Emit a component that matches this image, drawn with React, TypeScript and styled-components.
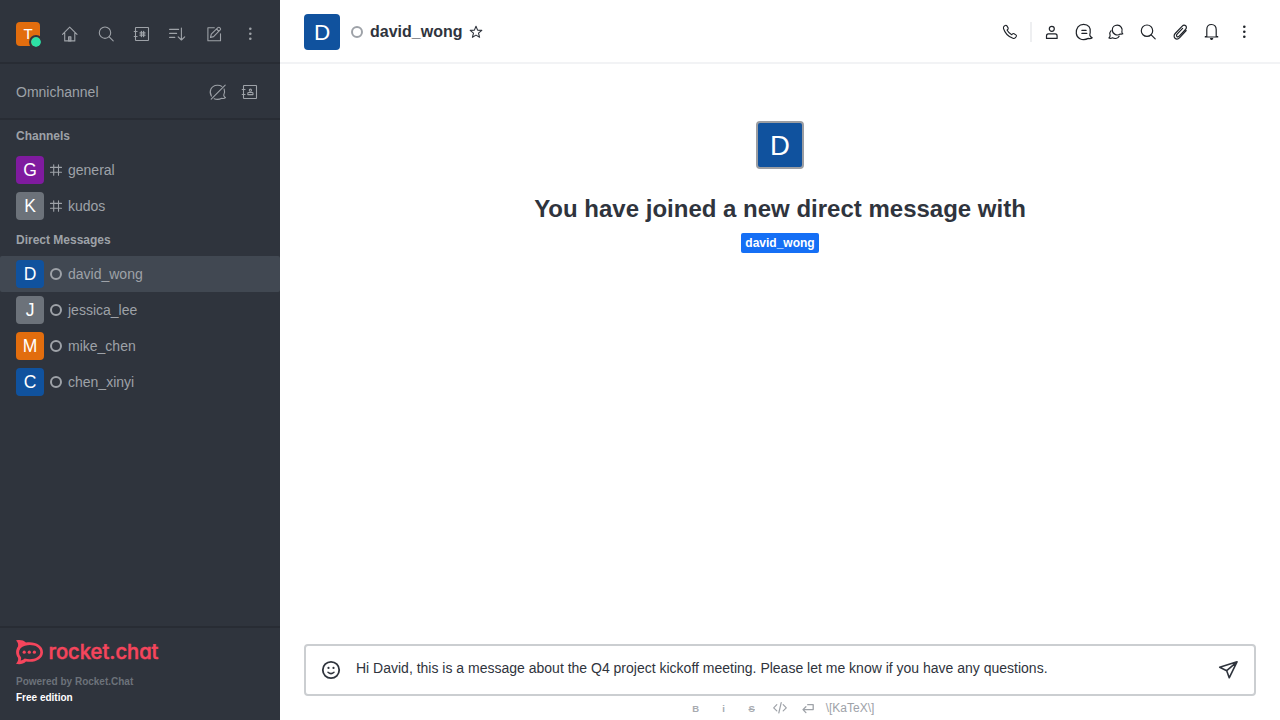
import React from 'react';
import styled, { createGlobalStyle } from 'styled-components';

const GlobalStyle = createGlobalStyle`
  *, *::before, *::after { box-sizing: border-box; }
  body { margin: 0; font-family: 'Liberation Sans', Arial, sans-serif; font-size: 14px; color: #2f343d; }
  h1, p { margin: 0; }
  button { border: 0; padding: 0; background: none; color: inherit; font: inherit; }
`;

const Page = styled.div`
  display: flex;
  width: 100%;
  height: 100vh;
  overflow: hidden;
  background: #fff;
`;

const Sidebar = styled.aside`
  display: flex;
  flex-direction: column;
  flex: 0 0 280px;
  background: #2f343d;
  color: #9ea2a8;
`;

const SidebarBar = styled.div`
  display: flex;
  align-items: center;
  justify-content: space-between;
  height: 64px;
  padding: 6px 16px 0;
  border-bottom: 2px solid #282c34;
`;

const OmniBar = styled.div`
  display: flex;
  align-items: center;
  justify-content: space-between;
  height: 56px;
  padding: 2px 16px 0;
  border-bottom: 2px solid #282c34;
`;

const Actions = styled.div<{ $gap: number }>`
  display: flex;
  align-items: center;
  gap: ${p => p.$gap}px;
`;

const HeaderActions = styled(Actions)`
  color: #1f2329;
`;

const IconButton = styled.button`
  display: flex;
  align-items: center;
  justify-content: center;
  width: 28px;
  height: 28px;
`;

const Avatar = styled.div<{ $size: number; $color: string; $ring?: boolean }>`
  display: flex;
  position: relative;
  flex: none;
  width: ${p => p.$size}px;
  height: ${p => p.$size}px;
  border: ${p => (p.$ring ? '2px solid #9c9ea2' : '0')};
  border-radius: 4px;
  background: ${p => p.$color};
`;

const Initial = styled.svg`
  display: block;
  width: 100%;
  height: 100%;
  fill: #fff;
  font-size: 125px;
  text-anchor: middle;
`;

const Presence = styled.span`
  position: absolute;
  right: -3px;
  bottom: -3px;
  width: 14px;
  height: 14px;
  border: 2px solid #2f343d;
  border-radius: 50%;
  background: #2de0a5;
  background-clip: padding-box;
`;

const Rooms = styled.nav`
  flex: 1;
`;

const SectionTitle = styled.div`
  height: 32px;
  padding-left: 16px;
  font-size: 12px;
  font-weight: 700;
  line-height: 32px;
`;

const Room = styled.div<{ $active?: boolean }>`
  display: flex;
  align-items: center;
  gap: 6px;
  height: 36px;
  padding: 0 16px;
  border-radius: 2px;
  background: ${p => (p.$active ? '#414852' : 'transparent')};
`;

const Offline = styled.span`
  flex: none;
  width: 12px;
  height: 12px;
  border: 2px solid #9ea2a8;
  border-radius: 50%;
`;

const Footer = styled.footer`
  height: 94px;
  padding: 11px 16px 0;
  border-top: 2px solid #282c34;
  font-size: 10px;
  font-weight: 700;
  line-height: 16px;
`;

const Brand = styled.div`
  display: flex;
  align-items: center;
  gap: 6px;
  height: 26px;
  margin-bottom: 9px;
  color: #f5455c;
`;

const Powered = styled.p`
  color: #6c727a;
`;

const Edition = styled.p`
  color: #fff;
`;

const Main = styled.main`
  display: flex;
  flex: 1;
  flex-direction: column;
  min-width: 0;
`;

const RoomHeader = styled.header`
  display: flex;
  align-items: center;
  height: 64px;
  padding: 2px 22px 0 24px;
  border-bottom: 2px solid #f2f3f5;
`;

const RoomTitle = styled.div`
  display: flex;
  flex: 1;
  align-items: center;
  gap: 7px;
  margin-left: 11px;
  font-size: 16px;
  font-weight: 700;
`;

const Divider = styled.span`
  width: 2px;
  height: 20px;
  margin: 0 2px;
  background: #eeeff1;
`;

const Intro = styled.section`
  display: flex;
  flex: 1;
  flex-direction: column;
  align-items: center;
  padding-top: 57px;
`;

const Heading = styled.h1`
  margin-top: 24px;
  font-size: 24px;
  font-weight: 700;
  line-height: 32px;
`;

const Tag = styled.span`
  height: 20px;
  margin-top: 8px;
  padding: 0 4px;
  border-radius: 2px;
  background: #156ff5;
  color: #fff;
  font-size: 12px;
  font-weight: 700;
  line-height: 20px;
`;

const Composer = styled.div`
  display: flex;
  align-items: center;
  height: 52px;
  margin: 0 24px;
  padding: 0 14px 0 13px;
  border: 2px solid #cbced1;
  border-radius: 4px;
`;

const Message = styled.p`
  flex: 1;
  margin-left: 13px;
  padding-bottom: 4px;
  line-height: 20px;
`;

const Formatting = styled.div`
  display: flex;
  align-items: center;
  justify-content: center;
  gap: 8px;
  height: 24px;
  color: #9ea2a8;
  font-size: 12px;
`;

const Format = styled.span`
  display: flex;
  justify-content: center;
  width: 20px;
`;

const Svg = styled.svg`
  display: block;
  flex: none;
  overflow: visible;
  fill: none;
  stroke: currentColor;
  stroke-linecap: round;
  stroke-linejoin: round;
`;

const shapes = {
  home: <><path d="M2.5 10.400 9.700 3.200l7.300 7.200M4.700 8.800v8.100h10.100V8.800" /><path d="M8.600 16.900v-4.100h2.300v4.100Z" fill="currentColor" fillOpacity=".6" /></>,
  search: <><circle cx="9" cy="8.7" r="5.7" /><path d="m13.2 12.9 4 4" /></>,
  directory: <><rect x="3.5" y="3.5" width="13" height="13" rx=".5" /><path d="M2.200 7.500h2.900M2.200 12.500h2.900" /><path d="M9.400 7.500v5M11.600 7.500v5M8 8.900h5M8 11.200h5" strokeWidth="1.300" /></>,
  sort: <><path d="M1.600 5.400h9M1.600 9.400h7M1.600 13.400h5.200M13.400 4v12m-3.200-3.200 3.200 3.200 3.300-3.200" /></>,
  edit: <><path d="M10.300 3.700H3.900v13h12.600V9.800M6.500 13.500l.8-3.300 6.600-6.600q1-.8 2.100.2t.2 2.100l-6.600 6.700ZM12.600 5l2.200 2.300" /></>,
  kebab: <g fill="currentColor" stroke="none"><circle cx="10.300" cy="4.700" r="1.300" /><circle cx="10.300" cy="9.800" r="1.300" /><circle cx="10.300" cy="14.800" r="1.300" /></g>,
  omniOff: <><path d="M3.400 14.100C.6 9.400 3 3.500 9.200 3.200c1.900-.1 3.400.3 4.600 1.200M16.100 7c.8 2 .6 4.300-.4 6.200.2 1.200.9 2 1.800 2.500-.9.8-2.200 1-3.600.6-2.700 1.300-5.400 1.400-7.700.5M3.200 17.200 17.200 3.100" /></>,
  contacts: <><rect x="3.500" y="3.500" width="13" height="13" rx=".5" /><path d="M2.200 7.500h2.900M2.200 12.500h2.900" /><circle cx="10.400" cy="8.200" r="1.100" /><path d="M7.800 12.600v-1.200q0-.9.8-.9h3.600q.8 0 .8.9v1.200Z" /></>,
  phone: <><path d="M4.100 4.200 5.300 3.400q1-.4 1.600.5l1.200 2q.4 1-.4 1.600l-.7.6q1.600 3 4.700 4.700l.7-.8q.7-.8 1.600-.3l1.900 1.200q.9.7.4 1.600l-.9 1.200q-1 1.100-2.500.6C8.400 14.700 5 11.200 3.500 6.500q-.3-1.400.6-2.300Z" /></>,
  user: <><circle cx="9.800" cy="6.800" r="2.500" /><path d="M4.500 16.400v-2.500q0-2.100 1.800-2.100h7q1.800 0 1.800 2.100v2.500Z" /></>,
  discussion: <><path d="M9.600 2.400c4.800 0 7.500 3.400 6.600 8.200-.2 1.200-.6 2-.3 2.900.3.900 1.100 1.700 2.300 2.200-1 .9-2.500 1.100-3.900.7-2.500 1.300-6 1.500-8.400.3C1.500 14.400 1.300 8.600 4 4.900c1.400-1.700 3.300-2.500 5.600-2.500ZM7.900 8.400h4.200M7.900 11.400h4.900" /></>,
  threads: <><path d="M11.300 3.200a4.900 4.900 0 0 1 4.600 6.600c-.1.700.3 1.400.9 2-.8.500-1.700.5-2.600.2A5 5 0 0 1 6.300 8c0-2.800 2.200-4.800 5-4.800ZM4.900 8.800C3.600 10.200 3.500 11.900 4.100 13.300c.1 1.100-.3 2-1.200 2.700 1.200.6 2.400.5 3.500-.2 2.800 1.200 5.700.4 6.700-1.600" /></>,
  clip: <><path d="m16.200 8.600-6.500 7c-1.400 1.500-3.500 1.700-4.700.6s-1.200-3.200.2-4.700l6.800-7.200c1.200-1.200 2.700-1.400 3.700-.5s.9 2.500-.2 3.700l-6.300 6.700c-.7.800-1.700.9-2.300.3s-.5-1.600.2-2.300l5.500-5.800" /></>,
  bell: <><path d="M4.800 14.400V7.500C4.800 4.500 6.500 2.500 9.500 2.500s4.700 2 4.700 5v6.900l1.500.3v.3H3.300v-.3Z" /><path d="M8.500 16.700h2.200l-1.100.7Z" /></>,
};

type IconName = keyof typeof shapes;

const Icon = ({ name, weight = 1.1 }: { name: IconName; weight?: number }) => (
  <Svg width="20" height="20" viewBox="0 0 20 20" strokeWidth={weight}>{shapes[name]}</Svg>
);

const Hash = () => (
  <Svg width="12" height="12" viewBox="0 0 12 12" strokeWidth="1.1">
    <path d="M3.700.7v10.600M8.500.7v10.600M.5 3.400h11M.5 8.200h11" />
  </Svg>
);

const Star = () => (
  <Svg width="14" height="14" viewBox="0 0 14 14" strokeWidth="1.1">
    <path d="m7 1.200 1.600 3.900 4.200.3-3.300 2.700 1.100 4.200L7 10.100l-3.600 2.200 1.100-4.200-3.300-2.700 4.200-.3Z" />
  </Svg>
);

const Smile = () => (
  <Svg width="24" height="24" viewBox="0 0 24 24" strokeWidth="1.8">
    <circle cx="12" cy="12" r="8.2" />
    <path d="M9 14.300q3 2.700 6 0" strokeWidth="1.500" />
    <g fill="currentColor" stroke="none"><circle cx="9.500" cy="9.900" r="1.100" /><circle cx="14.500" cy="9.900" r="1.100" /></g>
  </Svg>
);

const Send = () => (
  <Svg width="24" height="24" viewBox="0 0 24 24" strokeWidth="1.6">
    <path d="m21 3.800-17.300 5.500 7 3.400 2.500 7.100ZM10.700 12.700 21 3.800" />
  </Svg>
);

const RocketMark = () => (
  <Svg width="27" height="24" viewBox="0 0 27 24">
    <path fill="currentColor" stroke="none" fillRule="evenodd" d="M0 .5C3.500-.4 7.500 0 10 2.600 19 1.200 27 5.500 27 12.200 27 18.800 19 23.100 10 21.500 7.500 24 3.500 24.700 0 23.700 1.800 21.800 2.600 19.800 2 17.700-.5 14.300-.5 9.800 2 6.500 2.600 4.200 1.800 2.200 0 .5ZM4.600 8.300C2.300 11 2.500 14.500 5 17.200 5.300 18.500 5.100 19.500 4.600 20.500 6.300 20.200 7.500 19.600 8.700 18.500 16.300 20.600 24.300 17.700 24.300 12.200 24.300 6.500 16.500 3.600 9 5.700 7.300 6.200 5.700 7 4.600 8.300Z" />
    <g fill="currentColor" stroke="none"><circle cx="8.200" cy="12.200" r="1.600" /><circle cx="13.300" cy="12.200" r="1.600" /><circle cx="18.400" cy="12.200" r="1.600" /></g>
  </Svg>
);

const Wordmark = styled.svg`
  display: block;
  overflow: visible;
  fill: currentColor;
  font-family: Inter, sans-serif;
  font-size: 20.5px;
  font-weight: 500;
  font-feature-settings: 'cv11';
  stroke: currentColor;
  stroke-width: 0.5;
`;

const CodeIcon = () => (
  <Svg width="14" height="12" viewBox="0 0 14 12" strokeWidth="1.2">
    <path d="M3.800 2.700.7 5.800l3.100 3.100M10.200 2.700l3.100 3.100-3.100 3.100M8.200.7 5.800 11" />
  </Svg>
);

const ReturnIcon = () => (
  <Svg width="12" height="12" viewBox="0 0 12 12" strokeWidth="1.3">
    <path d="M5.700 2.700h5.500v4.900H1M3.900 4.700 1 7.600l2.900 3" />
  </Svg>
);

const Letter = styled.span<{ $strike?: boolean }>`
  padding-top: 1px;
  font-size: 9.5px;
  font-weight: 700;
  line-height: 12px;
  opacity: 0.9;
  text-decoration: ${p => (p.$strike ? 'line-through' : 'none')};
`;

const BLUE = '#10529e';
const GREY = '#6c727a';
const ORANGE = '#e26d0e';

const UserAvatar = ({ name, size, color, ring, children }: {
  name: string; size: number; color: string; ring?: boolean; children?: React.ReactNode;
}) => (
  <Avatar $size={size} $color={color} $ring={ring}>
    <Initial viewBox="0 0 200 200"><text x="100" y="145">{name[0].toUpperCase()}</text></Initial>
    {children}
  </Avatar>
);

const channels = [
  { name: 'general', color: '#7f1b9f' },
  { name: 'kudos', color: GREY },
];

const directs = [
  { name: 'david_wong', color: BLUE },
  { name: 'jessica_lee', color: GREY },
  { name: 'mike_chen', color: ORANGE },
  { name: 'chen_xinyi', color: BLUE },
];

const sidebarIcons: IconName[] = ['home', 'search', 'directory', 'sort', 'edit', 'kebab'];
const headerIcons: IconName[] = ['user', 'discussion', 'threads', 'search', 'clip', 'bell', 'kebab'];

export default function App() {
  return (
    <Page>
      <GlobalStyle />
      <Sidebar>
        <SidebarBar>
          <UserAvatar name="t" size={24} color={ORANGE}><Presence /></UserAvatar>
          <Actions $gap={8}>
            {sidebarIcons.map(n => <IconButton key={n}><Icon name={n} /></IconButton>)}
          </Actions>
        </SidebarBar>
        <OmniBar>
          <span>Omnichannel</span>
          <Actions $gap={4}>
            <IconButton><Icon name="omniOff" /></IconButton>
            <IconButton><Icon name="contacts" /></IconButton>
          </Actions>
        </OmniBar>
        <Rooms>
          <SectionTitle>Channels</SectionTitle>
          {channels.map(c => (
            <Room key={c.name}>
              <UserAvatar name={c.name} size={28} color={c.color} />
              <Hash />
              <span>{c.name}</span>
            </Room>
          ))}
          <SectionTitle>Direct Messages</SectionTitle>
          {directs.map((d, i) => (
            <Room key={d.name} $active={i === 0}>
              <UserAvatar name={d.name} size={28} color={d.color} />
              <Offline />
              <span>{d.name}</span>
            </Room>
          ))}
        </Rooms>
        <Footer>
          <Brand>
            <RocketMark />
            <Wordmark width="109" height="24" viewBox="0 0 109 24">
              <text x="-.5" y="18.500" textLength="110" lengthAdjust="spacingAndGlyphs">rocket.chat</text>
            </Wordmark>
          </Brand>
          <Powered>Powered by Rocket.Chat</Powered>
          <Edition>Free edition</Edition>
        </Footer>
      </Sidebar>
      <Main>
        <RoomHeader>
          <UserAvatar name="david_wong" size={36} color={BLUE} />
          <RoomTitle>
            <Offline />
            <span>david_wong</span>
            <Star />
          </RoomTitle>
          <HeaderActions $gap={4}>
            <IconButton><Icon name="phone" /></IconButton>
            <Divider />
            {headerIcons.map(n => <IconButton key={n}><Icon name={n} weight={1.2} /></IconButton>)}
          </HeaderActions>
        </RoomHeader>
        <Intro>
          <UserAvatar name="david_wong" size={48} color={BLUE} ring />
          <Heading>You have joined a new direct message with</Heading>
          <Tag>david_wong</Tag>
        </Intro>
        <Composer>
          <Smile />
          <Message>Hi David, this is a message about the Q4 project kickoff meeting. Please let me know if you have any questions.</Message>
          <Send />
        </Composer>
        <Formatting>
          <Format><Letter>B</Letter></Format>
          <Format><Letter>i</Letter></Format>
          <Format><Letter $strike>S</Letter></Format>
          <Format><CodeIcon /></Format>
          <Format><ReturnIcon /></Format>
          <span>\[KaTeX\]</span>
        </Formatting>
      </Main>
    </Page>
  );
}
